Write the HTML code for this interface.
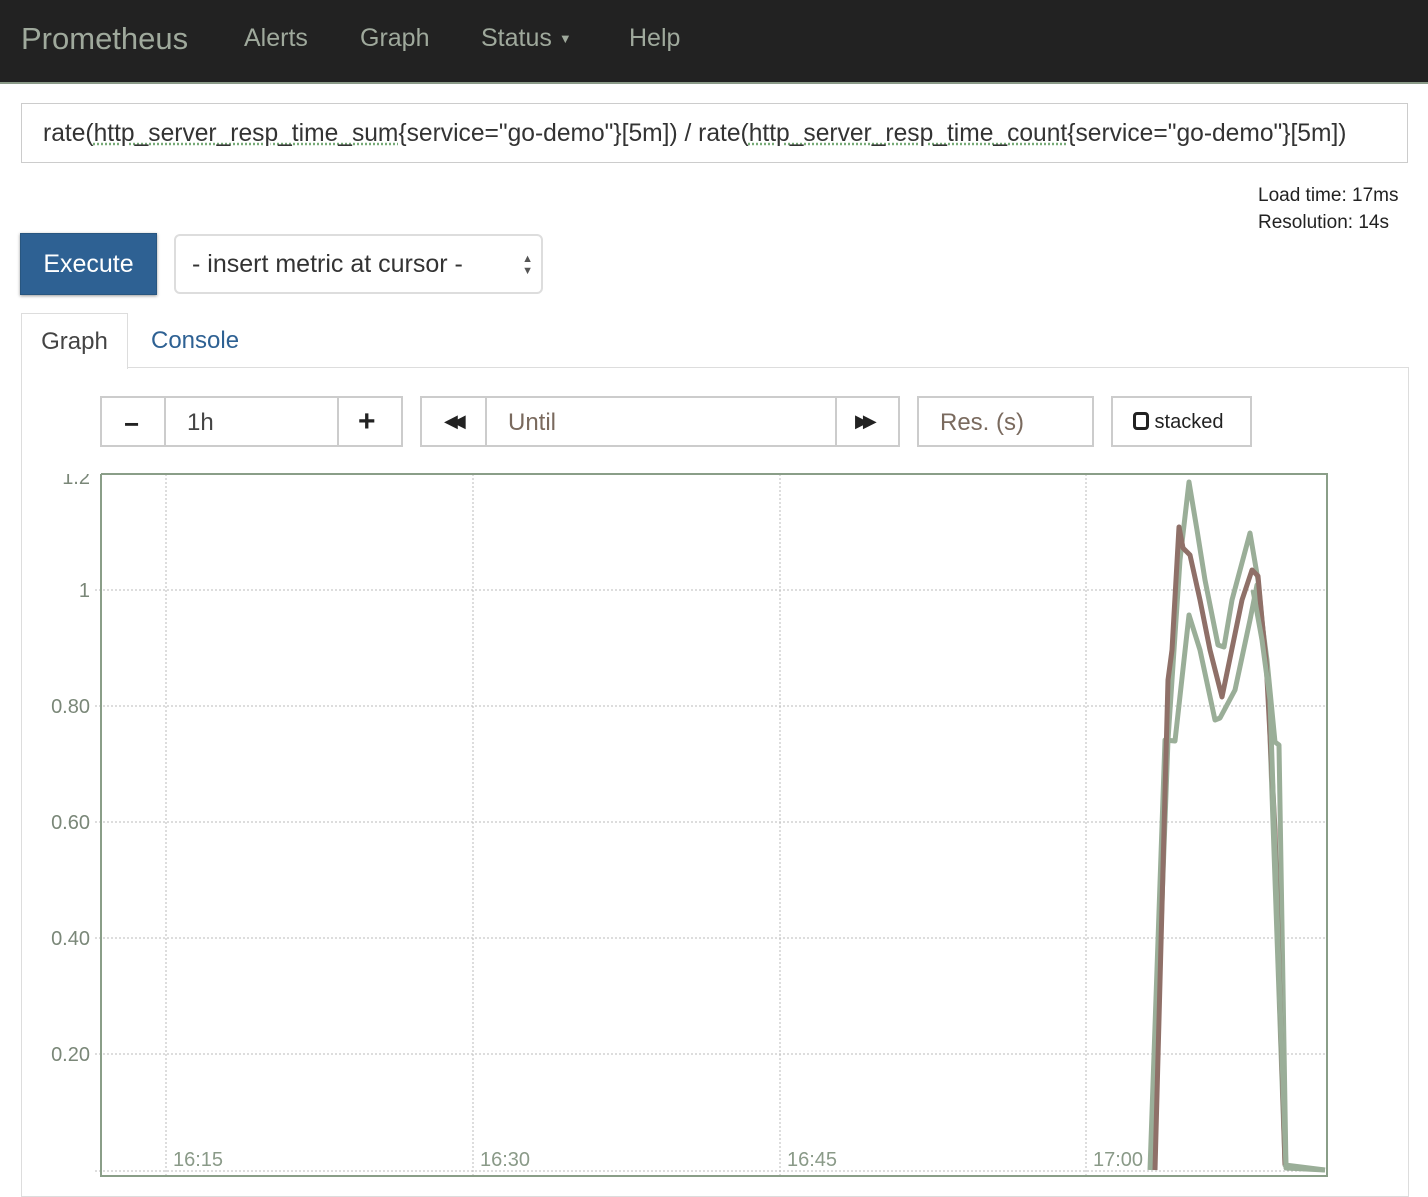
<!DOCTYPE html>
<html><head><meta charset="utf-8"><style>
*{box-sizing:border-box;margin:0;padding:0}
body{width:1428px;height:1186px;overflow:hidden;background:#fff;font-family:"Liberation Sans",sans-serif;position:relative;color:#333}
.nav{position:absolute;left:0;top:0;width:1428px;height:84px;background:#222;border-bottom:2px solid #8a9a88}
.nav span{position:absolute;top:24px;color:#9fa99c;font-size:25px}
.abs{position:absolute}
.box{position:absolute;border:2px solid #ccc;background:#fff}
</style></head><body>
<div class="nav">
<span style="left:21px;font-size:31px;top:21px">Prometheus</span>
<span style="left:244px">Alerts</span>
<span style="left:360px">Graph</span>
<span style="left:481px">Status <span style="position:relative;top:-3px;font-size:13px">▼</span></span>
<span style="left:629px">Help</span>
</div>
<div class="box" style="left:21px;top:103px;width:1387px;height:60px;border-width:1px"></div>
<div class="abs" style="left:43px;top:120px;font-size:24.6px;color:#333;white-space:nowrap">rate(<u style="text-decoration-style:dotted;text-decoration-color:#7a7">http_server_resp_time_sum</u>{service="go-demo"}[5m]) / rate(<u style="text-decoration-style:dotted;text-decoration-color:#7a7">http_server_resp_time_count</u>{service="go-demo"}[5m])</div>
<div class="abs" style="left:1258px;top:182px;font-size:19px;line-height:27px;color:#222">Load time: 17ms<br>Resolution: 14s</div>
<div class="abs" style="left:20px;top:233px;width:137px;height:62px;background:#2e6193;border:1px solid #285680;box-shadow:0 1px 3px #999;color:#fff;font-size:25px;text-align:center;line-height:60px">Execute</div>
<div class="abs" style="left:174px;top:234px;width:369px;height:60px;border:2px solid #ddd;border-radius:6px;font-size:25px;line-height:56px;padding-left:16px;color:#333">- insert metric at cursor -<span style="position:absolute;right:8px;font-size:11px;line-height:12px;top:17px;color:#555">▲<br>▼</span></div>
<div class="abs" style="left:21px;top:367px;width:1388px;height:830px;border:1px solid #ddd"></div>
<div class="abs" style="left:21px;top:313px;width:107px;height:56px;border:1px solid #ddd;border-bottom:none;background:#fff;font-size:24px;line-height:56px;text-align:center;color:#444">Graph</div>
<div class="abs" style="left:151px;top:327px;font-size:24px;color:#2e6193">Console</div>
<div class="box" style="left:100px;top:396px;width:303px;height:51px"></div>
<div class="abs" style="left:164px;top:396px;width:2px;height:51px;background:#ccc"></div>
<div class="abs" style="left:337px;top:396px;width:2px;height:51px;background:#ccc"></div>
<div class="abs" style="left:124px;top:409px;font-size:26px;font-weight:bold;color:#222">−</div>
<div class="abs" style="left:187px;top:409px;font-size:24px;color:#444">1h</div>
<div class="abs" style="left:358px;top:405px;font-size:30px;font-weight:bold;color:#222">+</div>
<div class="box" style="left:420px;top:396px;width:480px;height:51px"></div>
<div class="abs" style="left:485px;top:396px;width:2px;height:51px;background:#ccc"></div>
<div class="abs" style="left:835px;top:396px;width:2px;height:51px;background:#ccc"></div>
<div class="abs" style="left:444px;top:411px;font-size:18px;color:#222;letter-spacing:-6px">◀◀</div>
<div class="abs" style="left:855px;top:411px;font-size:18px;color:#222;letter-spacing:-6px">▶▶</div>
<div class="abs" style="left:508px;top:409px;font-size:24px;color:#7a6a5e">Until</div>
<div class="box" style="left:917px;top:396px;width:177px;height:51px"></div>
<div class="abs" style="left:940px;top:409px;font-size:24px;color:#7a6a5e">Res. (s)</div>
<div class="box" style="left:1111px;top:396px;width:141px;height:51px"></div>
<div class="abs" style="left:1133px;top:411px;font-size:20px;color:#222"><span style="display:inline-block;width:16px;height:18px;border:3px solid #222;border-radius:4px;vertical-align:-2px"></span> stacked</div>
<svg class="abs" style="left:0;top:0" width="1428" height="1186">
<g stroke="#bbb" stroke-dasharray="2,2" stroke-width="1">
<line x1="95" y1="590" x2="1327" y2="590"/><line x1="95" y1="706" x2="1327" y2="706"/><line x1="95" y1="822" x2="1327" y2="822"/><line x1="95" y1="938" x2="1327" y2="938"/><line x1="95" y1="1054" x2="1327" y2="1054"/><line x1="95" y1="1171" x2="1327" y2="1171"/>
<line x1="166" y1="474" x2="166" y2="1176"/><line x1="473" y1="474" x2="473" y2="1176"/><line x1="780" y1="474" x2="780" y2="1176"/><line x1="1086" y1="474" x2="1086" y2="1176"/>
</g>
<g stroke="#8a9e88" fill="none" stroke-width="2"><polyline points="101,474 1327,474 1327,1176 101,1176 101,474"/></g>
<g fill="#7a8778" font-size="20" font-family="Liberation Sans" text-anchor="end">
<text x="90" y="484">1.2</text><text x="90" y="597">1</text><text x="90" y="713">0.80</text><text x="90" y="829">0.60</text><text x="90" y="945">0.40</text><text x="90" y="1061">0.20</text></g>
<rect x="40" y="464" width="60" height="10" fill="#fff"/>
<g fill="#8a9a88" font-size="20" font-family="Liberation Sans">
<text x="173" y="1166">16:15</text><text x="480" y="1166">16:30</text><text x="787" y="1166">16:45</text><text x="1093" y="1166">17:00</text></g>
<g fill="none" stroke-width="5" stroke-linejoin="round">
<polyline stroke="#9aae98" points="1150,1170 1165,740 1175,741 1189,615 1200,650 1215,720 1220,718 1235,690 1250,620 1257,585 1267,660 1275,742 1279,745 1286,1168 1325,1170"/>
<polyline stroke="#9aae98" points="1152,1170 1168,740 1180,560 1189,482 1197,530 1205,580 1218,645 1224,647 1232,600 1250,533 1258,580 1268,680 1285,1165 1325,1170"/>
<polyline stroke="#8f7068" points="1155,1170 1168,680 1172,650 1179,527 1183,548 1190,555 1200,600 1210,650 1222,697 1242,600 1252,570 1258,576 1262,620 1266,660 1275,830 1285,1165"/>
<polyline stroke="#9aae98" points="1253,590 1262,640 1270,700 1280,1000 1286,1168"/>
</g>
</svg>
</body></html>
